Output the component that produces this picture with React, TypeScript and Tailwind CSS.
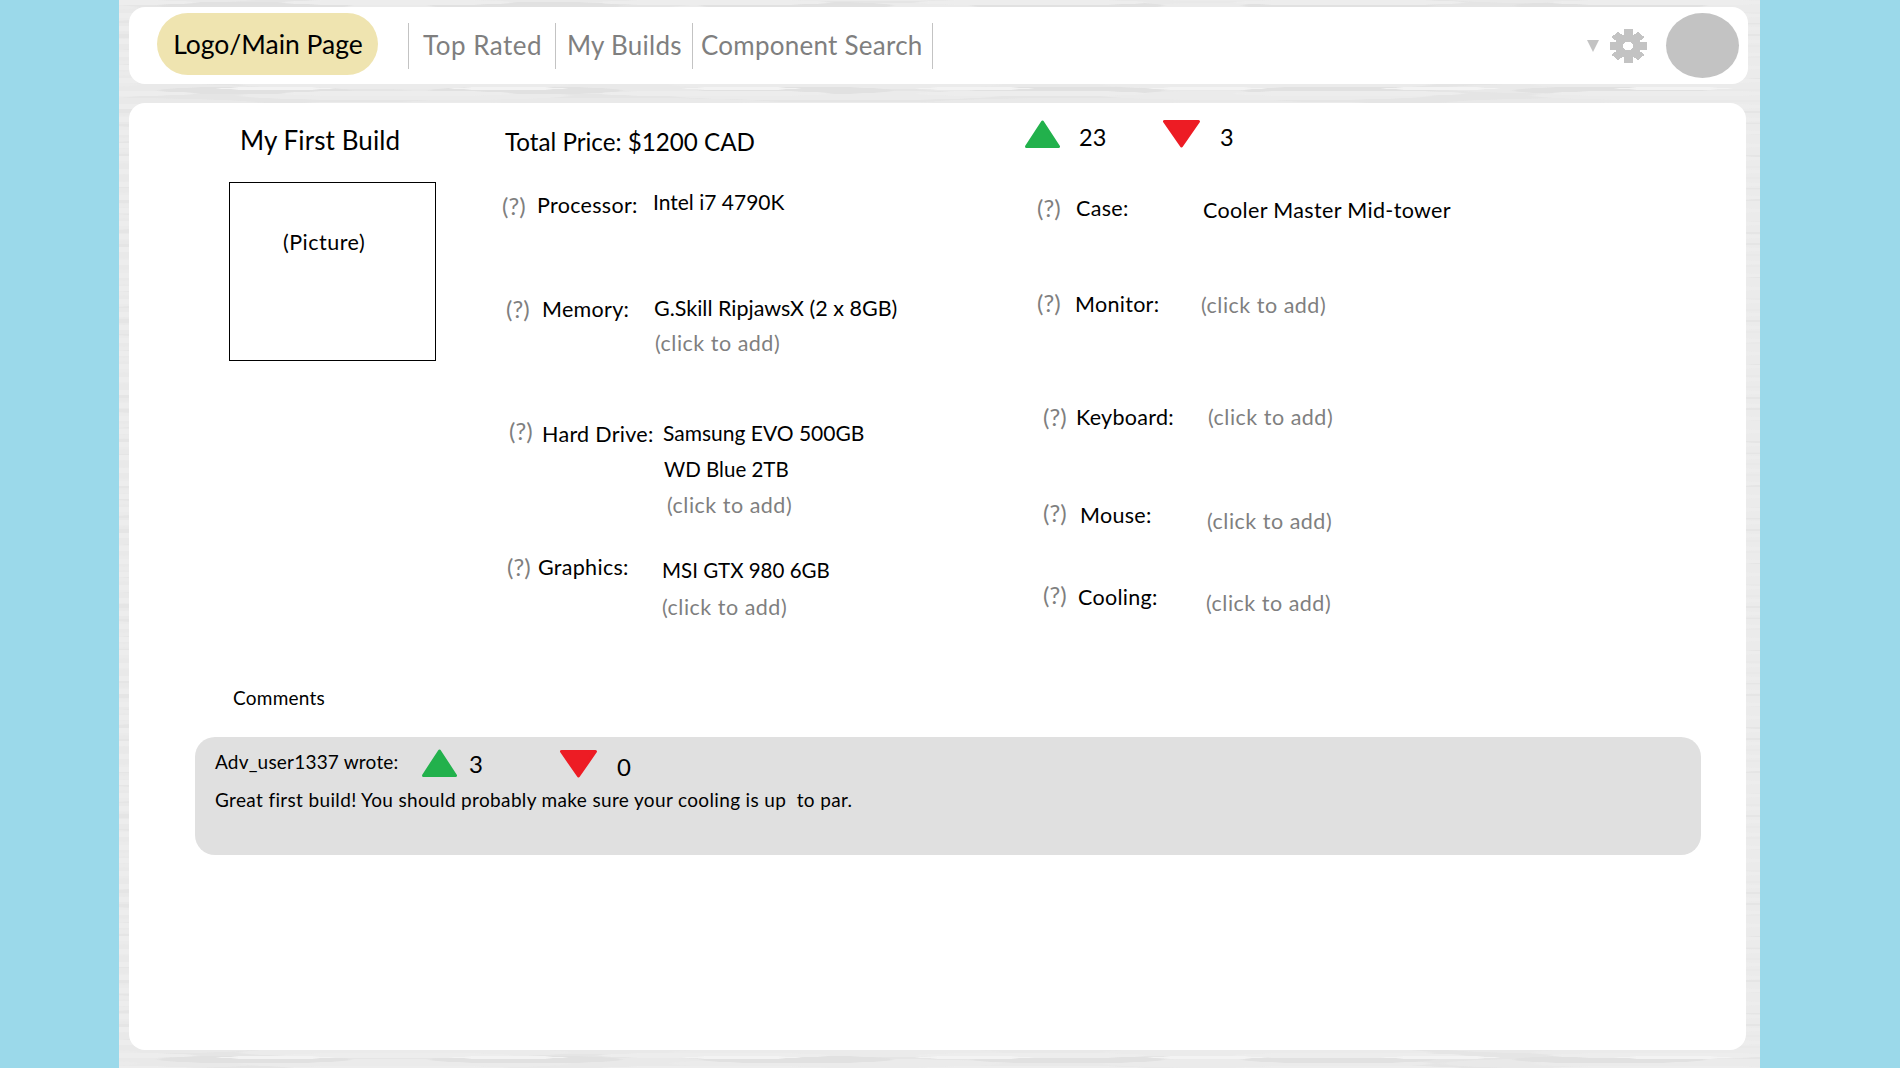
import type { ReactNode } from 'react';

function TriangleUp() {
  return (
    <svg width="35" height="28" viewBox="0 0 35 28" className="shrink-0">
      <polygon points="17.5,2 33.5,26.5 1.5,26.5" fill="#22b14c" stroke="#22b14c" strokeWidth="3" strokeLinejoin="round" />
    </svg>
  );
}

function TriangleDown() {
  return (
    <svg width="37" height="28" viewBox="0 0 37 28" className="shrink-0">
      <polygon points="1.5,1.5 35.5,1.5 18.5,26" fill="#ed1c24" stroke="#ed1c24" strokeWidth="3" strokeLinejoin="round" />
    </svg>
  );
}

function Gear() {
  const angles = [0, 45, 90, 135, 180, 225, 270, 315];
  return (
    <svg width="38" height="34" viewBox="0 0 38 34" className="ml-[10px] shrink-0" shapeRendering="crispEdges">
      <g transform="translate(19 17) scale(1 0.9)">
        {angles.map((a) => (
          <rect key={a} x="-4.5" y="-18.5" width="9" height="10" fill="#c3c3c3" transform={`rotate(${a})`} />
        ))}
        <circle r="9" fill="none" stroke="#c3c3c3" strokeWidth="8" />
      </g>
    </svg>
  );
}

function Help({ className }: { className: string }) {
  return <div className={`shrink-0 text-[24px] leading-6 text-[#7f7f7f] ${className}`}>(?)</div>;
}

function Add({ className = '' }: { className?: string }) {
  return <div className={`tracking-[0.5px] text-[#7f7f7f] ${className}`}>(click to add)</div>;
}

function SpecRow({
  rowClass,
  helpClass,
  labelClass,
  valueClass,
  label,
  children,
}: {
  rowClass: string;
  helpClass: string;
  labelClass: string;
  valueClass: string;
  label: string;
  children: ReactNode;
}) {
  return (
    <div className={`flex items-start ${rowClass}`}>
      <Help className={helpClass} />
      <div className={`shrink-0 tracking-[0.3px] ${labelClass}`}>{label}</div>
      <div className={`flex flex-col ${valueClass}`}>{children}</div>
    </div>
  );
}

const NAV_LINKS = [
  { label: 'Top Rated', cls: 'w-[147px] pl-[14px] border-l tracking-[0.5px]' },
  { label: 'My Builds', cls: 'w-[137px] pl-[11px] border-l tracking-[0.25px]' },
  { label: 'Component Search', cls: 'w-[241px] pl-[8px] border-x tracking-[0.25px]' },
];

export default function App() {
  return (
    <div className="h-[1068px] overflow-hidden bg-[#9bd9ea] pl-[119px] text-[21.5px] leading-6 text-black [font-family:Lato,sans-serif]">
      <div className="h-full w-[1641px] bg-[#e5e5e5] [background-image:radial-gradient(ellipse_60px_1.5px_at_50%_50%,#f3f3f3_90%,transparent),radial-gradient(ellipse_120px_3px_at_50%_50%,#ededed_92%,transparent),radial-gradient(ellipse_100px_4px_at_50%_50%,#e1e1e1_92%,transparent),radial-gradient(ellipse_170px_5px_at_50%_50%,#ebebeb_94%,transparent),radial-gradient(ellipse_200px_6px_at_50%_50%,#e9e9e9_94%,transparent)] [background-size:233px_19px,317px_13px,271px_17px,431px_11px,523px_15px] [background-position:40px_3px,120px_9px,0px_14px,70px_2px,210px_6px] pt-[7px] pl-[10px]">
        <nav className="flex h-[77px] w-[1619px] items-center rounded-2xl bg-white pr-[9px] pl-[28px]">
          <div className="mb-[3px] flex h-[62px] w-[221px] items-center justify-center rounded-full bg-[#efe4b0] pb-[1px] pl-[1px] text-[26.5px] leading-6">
            Logo/Main Page
          </div>
          <div className="ml-[30px] flex items-stretch">
            {NAV_LINKS.map((l) => (
              <div key={l.label} className={`flex h-[46px] items-center border-[#c3c3c3] pb-[2px] text-[26px] text-[#7f7f7f] ${l.cls}`}>
                {l.label}
              </div>
            ))}
          </div>
          <div className="ml-auto flex items-center">
            <div className="h-0 w-0 border-x-[6px] border-t-[12px] border-x-transparent border-t-[#c3c3c3]" />
            <Gear />
            <div className="mb-[1px] ml-[19px] h-[65px] w-[73px] rounded-[50%] bg-[#c3c3c3]" />
          </div>
        </nav>

        <main className="mt-[19px] h-[947px] w-[1617px] rounded-2xl bg-white">
          <div className="flex">
            <section className="w-[373px] shrink-0 pt-[25px] pl-[100px]">
              <h1 className="ml-[11px] text-[26px] font-normal tracking-[0.1px]">My First Build</h1>
              <div className="mt-[30px] h-[179px] w-[207px] border border-black pt-[47px] pl-[53px] tracking-[0.5px]">(Picture)</div>
            </section>

            <section className="w-[535px] shrink-0">
              <div className="h-[87px] pt-[27px] pl-[3px] text-[24.2px]">Total Price: $1200 CAD</div>
              <SpecRow
                rowClass="h-[106px]"
                helpClass="mt-1 w-[35px]"
                labelClass="mt-[3px] w-[116px]"
                valueClass=""
                label="Processor:"
              >
                <div className="text-[21px]">Intel i7 4790K</div>
              </SpecRow>
              <SpecRow
                rowClass="h-[123px] pl-[4px]"
                helpClass="mt-px w-[36px]"
                labelClass="mt-px w-[112px]"
                valueClass="gap-[11px]"
                label="Memory:"
              >
                <div>G.Skill RipjawsX (2 x 8GB)</div>
                <Add className="ml-px" />
              </SpecRow>
              <SpecRow
                rowClass="h-[136px] pl-[7px]"
                helpClass="w-[33px]"
                labelClass="mt-[3px] w-[121px]"
                valueClass="mt-[2px] gap-3"
                label="Hard Drive:"
              >
                <div className="text-[21px]">Samsung EVO 500GB</div>
                <div className="ml-px text-[20.5px]">WD Blue 2TB</div>
                <Add className="ml-[4px]" />
              </SpecRow>
              <SpecRow
                rowClass="pl-[5px]"
                helpClass="w-[31px]"
                labelClass="w-[124px]"
                valueClass="mt-[3px] gap-[13px]"
                label="Graphics:"
              >
                <div className="text-[20.5px]">MSI GTX 980 6GB</div>
                <Add />
              </SpecRow>
            </section>

            <section className="flex-1">
              <div className="-ml-[12px] flex h-[45px] items-start pt-[17px] text-[23.5px]">
                <TriangleUp />
                <div className="mt-[5px] ml-[19px] w-[28px]">23</div>
                <div className="ml-[56px]">
                  <TriangleDown />
                </div>
                <div className="mt-[5px] ml-[20px]">3</div>
              </div>
              <SpecRow
                rowClass="mt-[48px] h-[95px]"
                helpClass="w-[39px]"
                labelClass="w-[127px]"
                valueClass="mt-[2px]"
                label="Case:"
              >
                <div className="tracking-[0.35px]">Cooler Master Mid-tower</div>
              </SpecRow>
              <SpecRow
                rowClass="h-[114px]"
                helpClass="w-[38px]"
                labelClass="mt-px w-[126px]"
                valueClass="mt-[2px]"
                label="Monitor:"
              >
                <Add />
              </SpecRow>
              <SpecRow
                rowClass="h-[96px] pl-[6px]"
                helpClass="w-[33px]"
                labelClass="w-[132px]"
                valueClass=""
                label="Keyboard:"
              >
                <Add />
              </SpecRow>
              <SpecRow
                rowClass="h-[82px] pl-[6px]"
                helpClass="w-[37px]"
                labelClass="mt-[2px] w-[127px]"
                valueClass="mt-[8px]"
                label="Mouse:"
              >
                <Add />
              </SpecRow>
              <SpecRow
                rowClass="pl-[6px]"
                helpClass="w-[35px]"
                labelClass="mt-[2px] w-[128px]"
                valueClass="mt-[8px]"
                label="Cooling:"
              >
                <Add />
              </SpecRow>
            </section>
          </div>

          <h2 className="mt-[67px] ml-[104px] text-[19px] font-normal tracking-[0.25px]">Comments</h2>
          <div className="mt-[27px] ml-[66px] h-[118px] w-[1506px] rounded-[20px] bg-[#e0e0e0] px-[20px] pt-[12px] text-[19px]">
            <div className="flex items-start">
              <div className="mt-[1px] w-[207px] shrink-0 tracking-[0.2px]">Adv_user1337 wrote:</div>
              <TriangleUp />
              <div className="mt-[3px] ml-[12px] w-[91px] shrink-0 text-[24px]">3</div>
              <div className="mt-px">
                <TriangleDown />
              </div>
              <div className="mt-[6px] ml-[20px] text-[24px]">0</div>
            </div>
            <p className="mt-[9px] whitespace-pre tracking-[0.35px]">Great first build! You should probably make sure your cooling is up  to par.</p>
          </div>
        </main>
      </div>
    </div>
  );
}
